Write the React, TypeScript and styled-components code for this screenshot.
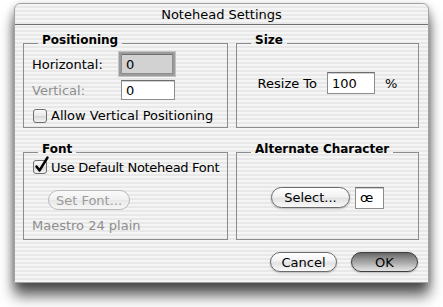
import React from 'react'
import styled, { createGlobalStyle } from 'styled-components'

const GlobalStyle = createGlobalStyle`
  html, body {
    margin: 0;
    padding: 0;
    background: #fff;
  }
  body {
    font-family: "DejaVu Sans", "Liberation Sans", sans-serif;
    font-size: 13px;
    color: #000;
  }
`

const pinstripes = `repeating-linear-gradient(to bottom, #f5f5f5 0px, #f5f5f5 2px, #e8e8e8 2px, #e8e8e8 4px)`

const Page = styled.div`
  width: 443px;
  height: 307px;
  padding: 3px 0 0 14px;
  box-sizing: border-box;
  overflow: hidden;
`

const Window = styled.div`
  width: 415px;
  height: 280px;
  box-sizing: border-box;
  display: flex;
  flex-direction: column;
  border: 1px solid #a2a2a2;
  border-radius: 6px 6px 0 0;
  background: ${pinstripes};
  box-shadow: 0 13px 14px rgba(0, 0, 0, .62), 0 3px 9px rgba(0, 0, 0, .3);
`

const TitleBar = styled.div`
  height: 20px;
  border-bottom: 1px solid #707070;
  display: flex;
  align-items: center;
  justify-content: center;
  font-size: 13px;
`

const Body = styled.div`
  display: flex;
  flex-direction: column;
  padding: 8px 10px 0 8px;
`

const Groups = styled.div`
  display: grid;
  grid-template-columns: 205px 183px;
  grid-template-rows: 95px 98px;
  column-gap: 8px;
  row-gap: 14px;
`

const Group = styled.fieldset<{ $center?: boolean; $padBottom?: number }>`
  margin: 0;
  padding: 0 8px ${({ $padBottom }) => $padBottom ?? 0}px;
  border: 1px solid #8c8c8c;
  min-width: 0;
  box-sizing: border-box;
  display: flex;
  flex-direction: column;
  ${({ $center }) => $center && `
    align-items: center;
    justify-content: center;
  `}
`

const Legend = styled.legend`
  margin-left: 6px;
  padding: 0 4px 6px;
  font-weight: bold;
  font-size: 12px;
  line-height: 14px;
`

const FormGrid = styled.div`
  display: grid;
  grid-template-columns: 89px 54px;
  grid-auto-rows: 22px;
  row-gap: 4px;
  align-items: center;
`

const Label = styled.span<{ $disabled?: boolean }>`
  color: ${({ $disabled }) => ($disabled ? '#8e8e8e' : '#000')};
  white-space: nowrap;
`

const Field = styled.div<{ $focused?: boolean; $width: number; $height?: number }>`
  width: ${({ $width }) => $width}px;
  height: ${({ $height }) => $height ?? 20}px;
  box-sizing: border-box;
  border: 1px solid #8d8d8d;
  border-top-color: #6e6e6e;
  background: ${({ $focused }) => ($focused ? '#d2d2d2' : '#fff')};
  box-shadow: ${({ $focused }) =>
    $focused ? '0 0 0 2px #9c9c9c, 0 0 0 3px #c4c4c4' : 'inset 0 1px 0 #d0d0d0'};
  padding-left: 4px;
  display: flex;
  align-items: center;
  font-size: 13px;
`

const CheckRow = styled.label<{ $span?: boolean; $offset?: number; $tight?: boolean }>`
  display: flex;
  align-items: center;
  gap: 4px;
  height: 16px;
  margin-top: ${({ $offset }) => $offset ?? 0}px;
  ${({ $span }) => $span && 'grid-column: 1 / span 2;'}
  ${({ $tight }) => $tight && 'letter-spacing: -0.3px;'}
  white-space: nowrap;
`

const Box = styled.span`
  position: relative;
  width: 14px;
  height: 14px;
  box-sizing: border-box;
  border: 1px solid #6f6f6f;
  border-radius: 3px;
  background: linear-gradient(#fdfdfd, #e6e6e6 50%, #d6d6d6 50%, #f4f4f4);
  margin-left: 1px;
  flex: none;

  svg {
    position: absolute;
    left: -1px;
    top: -5px;
  }
`

const Row = styled.div<{ $gap: number }>`
  display: flex;
  align-items: center;
  gap: ${({ $gap }) => $gap}px;
`

const PillButton = styled.button<{ $variant?: 'default' | 'disabled'; $width: number; $height?: number; $indent?: number; $top?: number }>`
  width: ${({ $width }) => $width}px;
  height: ${({ $height }) => $height ?? 20}px;
  margin: ${({ $top }) => $top ?? 0}px 0 0 ${({ $indent }) => $indent ?? 0}px;
  padding: 0;
  border-radius: 11px;
  font-family: inherit;
  font-size: 13px;
  display: flex;
  align-items: center;
  justify-content: center;
  flex: none;
  border: 1px solid ${({ $variant }) =>
    $variant === 'default' ? '#3e3e3e' : $variant === 'disabled' ? '#b9b9b9' : '#6a6a6a'};
  color: ${({ $variant }) => ($variant === 'disabled' ? '#9b9b9b' : '#000')};
  background: ${({ $variant }) =>
    $variant === 'default'
      ? 'linear-gradient(#666, #8f8f8f 30%, #ababab 55%, #cdcdcd 80%, #e2e2e2)'
      : $variant === 'disabled'
      ? 'linear-gradient(#fafafa, #f0f0f0 50%, #e8e8e8 50%, #f6f6f6)'
      : 'linear-gradient(#ffffff, #f2f2f2 45%, #e2e2e2 55%, #f9f9f9)'};
  box-shadow: ${({ $variant }) =>
    $variant === 'disabled' ? 'none' : '0 1px 2px rgba(0, 0, 0, .25)'};
`

const Note = styled.div`
  color: #8e8e8e;
  line-height: 16px;
  margin-top: 8px;
`

const Footer = styled.div`
  display: flex;
  justify-content: flex-end;
  gap: 14px;
  padding-top: 12px;
`

function CheckBox({ checked }: { checked?: boolean }) {
  return (
    <Box>
      {checked && (
        <svg width="18" height="19" viewBox="0 0 18 19">
          <path d="M3.5 10.5 L6.5 14.5 L14.5 1.5" fill="none" stroke="#000" strokeWidth="2.4" strokeLinecap="round" strokeLinejoin="round" />
        </svg>
      )}
    </Box>
  )
}

export default function App() {
  return (
    <>
      <GlobalStyle />
      <Page>
        <Window>
          <TitleBar>Notehead Settings</TitleBar>
          <Body>
            <Groups>
              <Group>
                <Legend>Positioning</Legend>
                <FormGrid>
                  <Label>Horizontal:</Label>
                  <Field $focused $width={52}>0</Field>
                  <Label $disabled>Vertical:</Label>
                  <Field $width={54}>0</Field>
                  <CheckRow $span $offset={-1}>
                    <CheckBox />
                    Allow Vertical Positioning
                  </CheckRow>
                </FormGrid>
              </Group>

              <Group $center $padBottom={14}>
                <Legend>Size</Legend>
                <Row $gap={10}>
                  <Label>Resize To</Label>
                  <Field $width={48} $height={22}>100</Field>
                  <Label>%</Label>
                </Row>
              </Group>

              <Group>
                <Legend>Font</Legend>
                <CheckRow $offset={-3} $tight>
                  <CheckBox checked />
                  Use Default Notehead Font
                </CheckRow>
                <PillButton $variant="disabled" $width={82} $indent={16} $top={15}>Set Font...</PillButton>
                <Note>Maestro 24 plain</Note>
              </Group>

              <Group $center $padBottom={6}>
                <Legend>Alternate Character</Legend>
                <Row $gap={5}>
                  <PillButton $width={79} $height={21}>Select...</PillButton>
                  <Field $width={29} $height={22}>œ</Field>
                </Row>
              </Group>
            </Groups>

            <Footer>
              <PillButton $width={67}>Cancel</PillButton>
              <PillButton $variant="default" $width={67}>OK</PillButton>
            </Footer>
          </Body>
        </Window>
      </Page>
    </>
  )
}
